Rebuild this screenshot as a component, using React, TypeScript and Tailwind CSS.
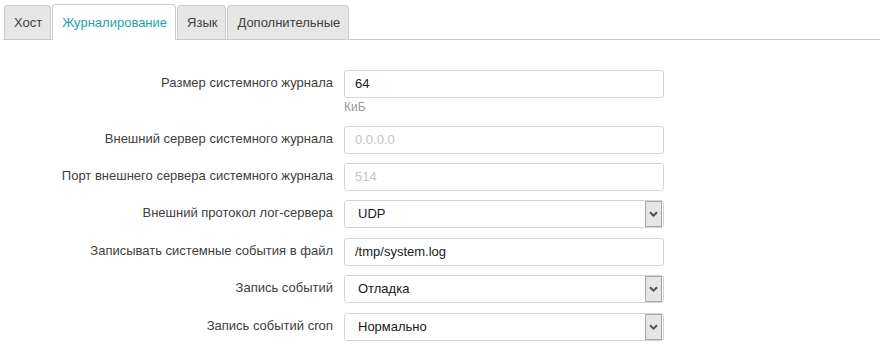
const tabs = ["Хост", "Журналирование", "Язык", "Дополнительные"];

const Chevron = () => (
  <svg width="9" height="6" viewBox="0 0 9 6" className="block">
    <path d="M1 1.2 L4.5 4.6 L8 1.2" fill="none" stroke="#505050" strokeWidth="2" />
  </svg>
);

const Field = ({
  value,
  disabled,
}: {
  value: string;
  disabled?: boolean;
}) => (
  <div
    className={`h-[28px] w-[320px] rounded-[3px] border border-[#d4d4d4] bg-white pl-[10px] text-[13px] leading-[26px] ${
      disabled ? "text-[#c4c4c4]" : "text-[#1a1a1a]"
    }`}
  >
    {value}
  </div>
);

const Select = ({ value }: { value: string }) => (
  <div className="flex h-[28px] w-[320px] items-stretch rounded-[3px] border border-[#d4d4d4] bg-white text-[13px] leading-[26px] text-[#1a1a1a]">
    <div className="flex-1 pl-[13px]">{value}</div>
    <div className="mr-[1px] flex w-[17px] items-center justify-center border border-[#a6a6a6] bg-[#e6e6e6]">
      <Chevron />
    </div>
  </div>
);

const Row = ({
  label,
  children,
  className = "",
}: {
  label: string;
  children: React.ReactNode;
  className?: string;
}) => (
  <div className={`flex ${className}`}>
    <div className="h-[26px] w-[333px] text-right text-[13px] leading-[26px] text-[#404040]">
      {label}
    </div>
    <div className="ml-[11px]">{children}</div>
  </div>
);

export default function App() {
  return (
    <div
      className="h-[350px] w-[887px] bg-white"
      style={{ fontFamily: '"Liberation Sans", Arial, sans-serif' }}
    >
      <div className="pl-[3px] pr-[7px] pt-[4px]">
        <ul className="flex h-[36px] items-end border-b border-[#cccccc]">
          {tabs.map((t, i) => {
            const active = i === 1;
            return (
              <li
                key={t}
                className={`ml-[1px] rounded-t-[4px] border border-b-0 pl-[9px] pr-[8px] text-[13px] ${
                  active
                    ? "relative top-[1px] h-[36px] border-[#cccccc] bg-white leading-[35px] text-[#1e9fb0]"
                    : "h-[34px] border-[#cccccc] bg-[#e6e6e6] leading-[33px] text-[#404040]"
                }`}
              >
                {t}
              </li>
            );
          })}
        </ul>
      </div>

      <div className="flex flex-col pt-[30px]">
        <Row label="Размер системного журнала">
          <Field value="64" />
          <div className="mt-[2px] text-[12px] leading-[14px] text-[#999999]">КиБ</div>
        </Row>
        <Row label="Внешний сервер системного журнала" className="mt-[12px]">
          <Field value="0.0.0.0" disabled />
        </Row>
        <Row label="Порт внешнего сервера системного журнала" className="mt-[9px]">
          <Field value="514" disabled />
        </Row>
        <Row label="Внешний протокол лог-сервера" className="mt-[9px]">
          <Select value="UDP" />
        </Row>
        <Row label="Записывать системные события в файл" className="mt-[10px]">
          <Field value="/tmp/system.log" />
        </Row>
        <Row label="Запись событий" className="mt-[9px]">
          <Select value="Отладка" />
        </Row>
        <Row label="Запись событий cron" className="mt-[10px]">
          <Select value="Нормально" />
        </Row>
      </div>
    </div>
  );
}
